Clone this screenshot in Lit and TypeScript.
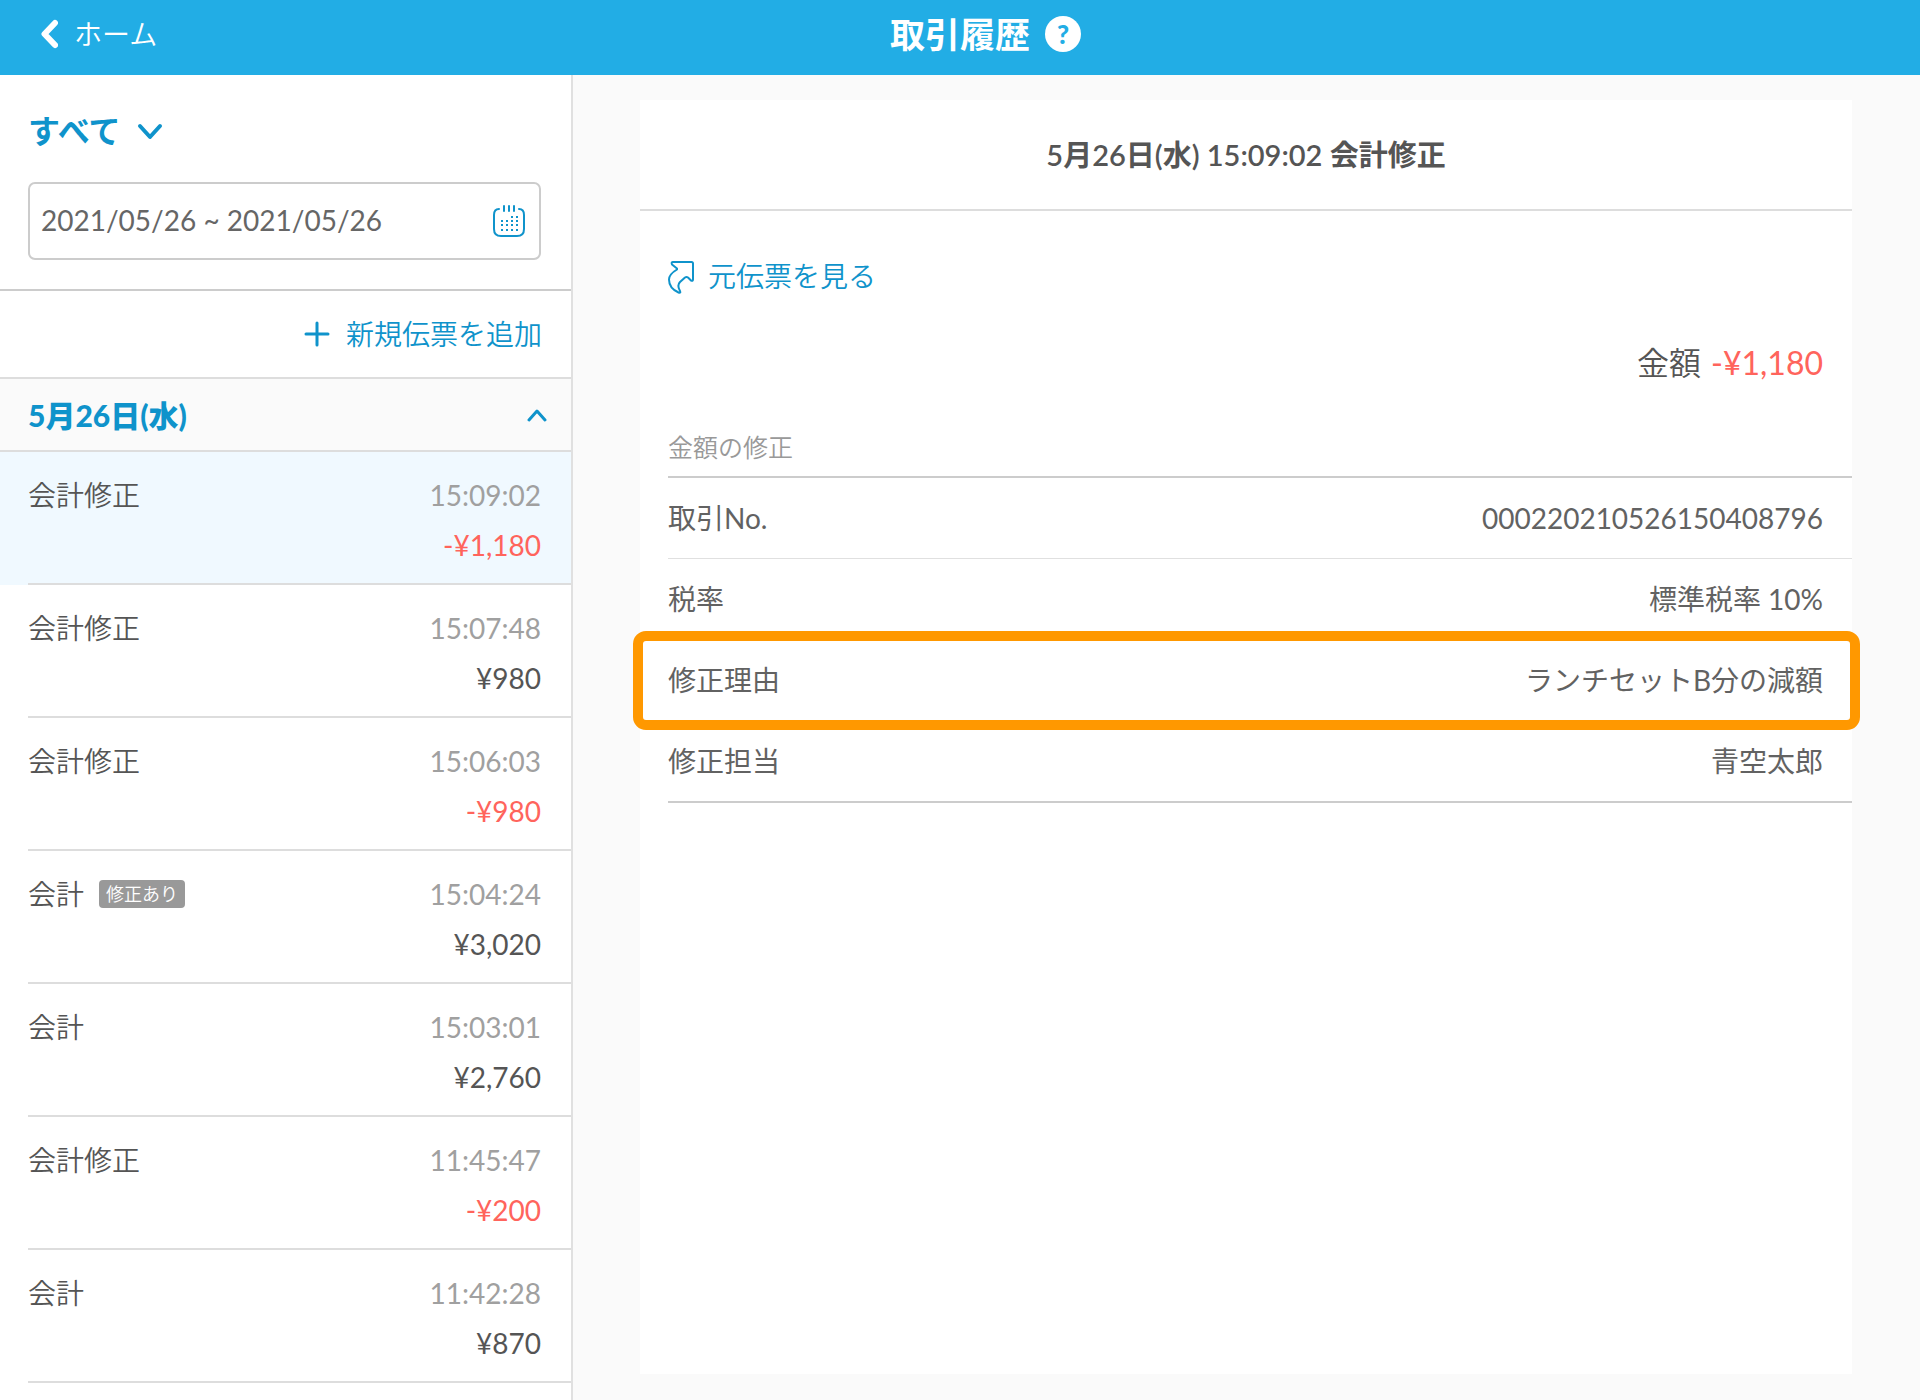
import { LitElement, html, css, nothing } from "lit";
import { customElement, property, state } from "lit/decorators.js";
import { classMap } from "lit/directives/class-map.js";

interface Entry {
  kind: string;
  time: string;
  amount: string;
  amended?: boolean;
}

interface Field {
  label: string;
  value: string;
  marked?: boolean;
}

const ENTRIES: Entry[] = [
  { kind: "会計修正", time: "15:09:02", amount: "-¥1,180" },
  { kind: "会計修正", time: "15:07:48", amount: "¥980" },
  { kind: "会計修正", time: "15:06:03", amount: "-¥980" },
  { kind: "会計", time: "15:04:24", amount: "¥3,020", amended: true },
  { kind: "会計", time: "15:03:01", amount: "¥2,760" },
  { kind: "会計修正", time: "11:45:47", amount: "-¥200" },
  { kind: "会計", time: "11:42:28", amount: "¥870" },
];

const FIELDS: Field[] = [
  { label: "取引No.", value: "000220210526150408796" },
  { label: "税率", value: "標準税率 10%" },
  { label: "修正理由", value: "ランチセットB分の減額", marked: true },
  { label: "修正担当", value: "青空太郎" },
];

const base = css`
  *,
  *::before,
  *::after {
    box-sizing: border-box;
  }
  h1,
  h2,
  p,
  ul,
  dl,
  dd {
    margin: 0;
    padding: 0;
  }
  ul {
    list-style: none;
  }
  button,
  input,
  select {
    margin: 0;
    padding: 0;
    border: 0;
    background: none;
    color: inherit;
    font: inherit;
    text-align: inherit;
  }
  button,
  select {
    cursor: pointer;
  }
  a {
    color: inherit;
    text-decoration: none;
  }
  svg {
    display: block;
    flex: none;
    fill: none;
    stroke: currentColor;
    stroke-linecap: round;
    stroke-linejoin: round;
  }
  .minus {
    color: #ff645c;
  }
`;

@customElement("app-header")
export class AppHeader extends LitElement {
  static styles = [
    base,
    css`
      :host {
        display: block;
        background: #22ade5;
        color: #fff;
      }
      .bar {
        display: grid;
        grid-template-columns: 1fr auto 1fr;
        align-items: center;
        height: 75px;
        padding: 0 40px 8px;
      }
      .home {
        display: flex;
        align-items: center;
        gap: 16px;
        justify-self: start;
        line-height: 40px;
      }
      .title {
        font-size: 35px;
        font-weight: 700;
        line-height: 40px;
      }
      .help {
        width: 36px;
        height: 36px;
        margin-left: 15px;
        border-radius: 50%;
        background: #fff;
        color: #22ade5;
        font-size: 26px;
        font-weight: 900;
        line-height: 36px;
        text-align: center;
      }
    `,
  ];

  render() {
    return html`
      <header class="bar">
        <a class="home" href="#home">
          <svg width="18" height="30" viewBox="0 0 18 30" stroke-width="6" aria-hidden="true">
            <path d="M15 4 L4.500 15 L15 26" />
          </svg>
          <span>ホーム</span>
        </a>
        <h1 class="title">取引履歴</h1>
        <button class="help" type="button" aria-label="ヘルプ">?</button>
      </header>
    `;
  }
}

@customElement("history-list")
export class HistoryList extends LitElement {
  @property({ attribute: false }) entries: Entry[] = [];
  @state() private open = true;
  @state() private selected = 0;

  static styles = [
    base,
    css`
      :host {
        display: block;
        border-right: 2px solid #e0e0e0;
        background: #fff;
      }
      .filters {
        display: grid;
        gap: 30px;
        padding: 34px 30px 29px 28px;
        border-bottom: 2px solid #ccc;
      }
      .type {
        display: grid;
        align-items: center;
        justify-self: start;
        color: #0f93cb;
      }
      .type > * {
        grid-area: 1 / 1;
      }
      .type select {
        appearance: none;
        height: 43px;
        padding-right: 38px;
        font-size: 32px;
        font-weight: 700;
      }
      .type svg {
        justify-self: end;
        pointer-events: none;
      }
      .range {
        display: flex;
        align-items: center;
        height: 78px;
        padding: 0 13px 0 11px;
        border: 2px solid #ccc;
        border-radius: 7px;
      }
      .range input {
        flex: 1;
        min-width: 0;
        height: 60px;
        padding-bottom: 3px;
        color: #666;
        font-weight: 400;
      }
      .range button {
        color: #0f93cb;
      }
      .add {
        display: flex;
        justify-content: flex-end;
        padding: 0 29px 0 28px;
        border-bottom: 2px solid #ddd;
        color: #0f93cb;
      }
      .add button {
        display: flex;
        align-items: center;
        gap: 16px;
        height: 86px;
      }
      .day {
        display: flex;
        align-items: center;
        justify-content: space-between;
        width: 100%;
        height: 73px;
        padding: 0 24px 0 28px;
        border-bottom: 2px solid #ddd;
        background: #fafafa;
        color: #0f93cb;
        font-size: 30px;
        font-weight: 900;
      }
      .entry {
        display: block;
        width: 100%;
        padding-left: 28px;
      }
      .entry.selected {
        background: #f0f9ff;
      }
      .cell {
        display: grid;
        grid-template-columns: 1fr auto;
        grid-auto-rows: 50px;
        align-items: center;
        height: 133px;
        padding: 18px 30px 0 0;
        border-bottom: 2px solid #ddd;
      }
      .kind {
        display: flex;
        align-items: center;
        gap: 15px;
      }
      .badge {
        padding: 0 7px;
        border-radius: 4px;
        background: #999;
        color: #fff;
        font-size: 18px;
        line-height: 28px;
      }
      .time {
        color: #a0a0a0;
        font-weight: 400;
      }
      .amount {
        grid-column: 2;
        justify-self: end;
        font-weight: 400;
      }
    `,
  ];

  private row(e: Entry, i: number) {
    return html`
      <li>
        <button
          type="button"
          class=${classMap({ entry: true, selected: i === this.selected })}
          @click=${() => (this.selected = i)}
        >
          <span class="cell">
            <span class="kind">
              ${e.kind}${e.amended ? html`<span class="badge">修正あり</span>` : nothing}
            </span>
            <span class="time">${e.time}</span>
            <span class=${classMap({ amount: true, minus: e.amount.startsWith("-") })}>${e.amount}</span>
          </span>
        </button>
      </li>
    `;
  }

  render() {
    return html`
      <div class="filters">
        <div class="type">
          <select aria-label="取引の種類">
            <option>すべて</option>
            <option>会計</option>
          </select>
          <svg width="26" height="18" viewBox="0 0 26 18" stroke-width="4" aria-hidden="true">
            <path d="M3 4 L13 15 L23 4" />
          </svg>
        </div>
        <div class="range">
          <input type="text" aria-label="期間" value="2021/05/26 ~ 2021/05/26" />
          <button type="button" aria-label="カレンダーを開く">
            <svg width="34" height="34" viewBox="0 0 34 34" stroke-width="2" aria-hidden="true">
              <path d="M7 5 C3 5 2 8 2 11 V25 C2 30 4 32 9 32 H25 C30 32 32 30 32 25 V11 C32 8 31 5 27 5" />
              <path d="M12 2 V7 M17 2 V7 M22 2 V7" />
              <path
                stroke-linecap="butt"
                d="M19 13 h2 M24 13 h2 M9 17 h2 M14 17 h2 M19 17 h2 M24 17 h2 M9 21 h2 M14 21 h2 M19 21 h2 M24 21 h2 M9 26 h2 M14 26 h2 M19 26 h2 M24 26 h2"
              />
            </svg>
          </button>
        </div>
      </div>
      <div class="add">
        <button type="button">
          <svg width="26" height="26" viewBox="0 0 26 26" stroke-width="3" aria-hidden="true">
            <path d="M13 2 V24 M2 13 H24" />
          </svg>
          <span>新規伝票を追加</span>
        </button>
      </div>
      <button class="day" type="button" aria-expanded=${this.open} @click=${() => (this.open = !this.open)}>
        <span>5月26日(水)</span>
        <svg width="20" height="14" viewBox="0 0 20 14" stroke-width="3" aria-hidden="true">
          <path d=${this.open ? "M2 12 L10 3 L18 12" : "M2 2 L10 11 L18 2"} />
        </svg>
      </button>
      ${this.open ? html`<ul>${this.entries.map((e, i) => this.row(e, i))}</ul>` : nothing}
    `;
  }
}

@customElement("history-detail")
export class HistoryDetail extends LitElement {
  @property({ attribute: false }) fields: Field[] = [];

  static styles = [
    base,
    css`
      :host {
        display: block;
        background: #fff;
      }
      .title {
        height: 111px;
        border-bottom: 2px solid #ddd;
        font-size: 29px;
        font-weight: 600;
        line-height: 110px;
        text-align: center;
      }
      .body {
        padding: 43px 0 0 28px;
      }
      .origin {
        display: inline-flex;
        align-items: center;
        gap: 14px;
        color: #0f93cb;
        line-height: 44px;
      }
      .total {
        display: flex;
        justify-content: flex-end;
        gap: 10px;
        padding: 38px 29px 0 0;
        font-size: 32px;
        line-height: 44px;
      }
      .total .minus {
        font-weight: 400;
      }
      .caption {
        padding: 40px 0 7px;
        border-bottom: 2px solid #ccc;
        color: #999;
        font-size: 25px;
        line-height: 44px;
      }
      .fields {
        border-bottom: 2px solid #ccc;
        color: #626262;
        font-weight: 400;
      }
      .field {
        position: relative;
        display: flex;
        justify-content: space-between;
        padding-right: 29px;
        line-height: 80px;
      }
      .field + .field {
        border-top: 1px solid #e0e0e0;
      }
      .marked::after {
        content: "";
        position: absolute;
        inset: -9px -8px -10px -35px;
        z-index: 1;
        border: 10px solid #ff9800;
        border-radius: 13px;
        pointer-events: none;
      }
    `,
  ];

  render() {
    return html`
      <h2 class="title">5月26日(水) 15:09:02 会計修正</h2>
      <div class="body">
        <a class="origin" href="#origin">
          <svg width="26" height="36" viewBox="0 -2 26 36" stroke-width="2" aria-hidden="true">
            <path
              d="M5 2 H23.500 Q25 2 25 3.500 V19.500 Q25 21.500 23 20.500 L20 17.500 Q18.500 16.500 17 17.500 L12 22 C9.500 24.500 10 27.500 12 31 Q13 33.500 10.500 32.500 C5 30 1 25.500 1 19.500 C1 15.500 4 12.500 9 9.500 V8.500 L4 4.500 Q3 2 5 2 Z"
            />
          </svg>
          <span>元伝票を見る</span>
        </a>
        <p class="total"><span>金額</span><span class="minus">-¥1,180</span></p>
        <p class="caption">金額の修正</p>
        <dl class="fields">
          ${this.fields.map(
            (f) => html`
              <div class=${classMap({ field: true, marked: !!f.marked })}>
                <dt>${f.label}</dt>
                <dd>${f.value}</dd>
              </div>
            `
          )}
        </dl>
      </div>
    `;
  }
}

@customElement("app-root")
export class AppRoot extends LitElement {
  static styles = [
    base,
    css`
      :host {
        display: flex;
        flex-direction: column;
        min-height: 100vh;
        background: #fafafa;
        color: #555;
        font-family: Lato, "Noto Sans CJK JP", sans-serif;
        font-size: 28px;
        font-weight: 350;
        line-height: 40px;
      }
      .columns {
        display: flex;
        flex: 1;
      }
      .side {
        flex: 0 0 573px;
      }
      .main {
        display: grid;
        flex: 1;
        padding: 25px 68px 26px 67px;
      }
    `,
  ];

  render() {
    return html`
      <app-header></app-header>
      <div class="columns">
        <history-list class="side" .entries=${ENTRIES}></history-list>
        <main class="main">
          <history-detail .fields=${FIELDS}></history-detail>
        </main>
      </div>
    `;
  }
}
